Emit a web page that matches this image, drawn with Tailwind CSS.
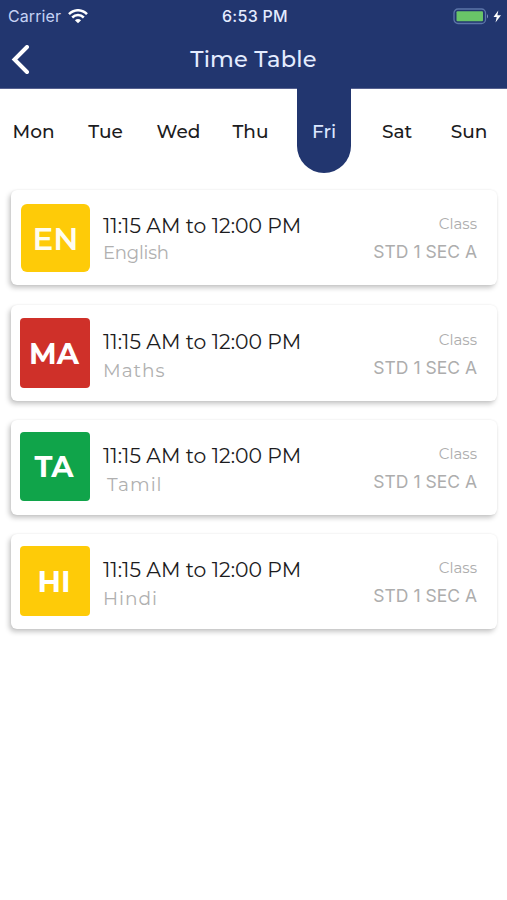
<!DOCTYPE html>
<html lang="en">
<head>
<meta charset="utf-8">
<title>Time Table</title>
<script src="https://cdn.jsdelivr.net/npm/@tailwindcss/browser@4"></script>
</head>
<body class="w-[507px] h-[900px] overflow-hidden bg-white font-['Montserrat','Inter',sans-serif] text-[#1c1c1e]">
<header class="h-[89px] bg-[#22366f] border-b border-[#56618f] text-[#e4ecff]">
  <div class="h-8 grid grid-cols-3 items-center pl-2 pr-[5px] font-['Inter',sans-serif] text-[16px] leading-8">
    <div class="flex items-center gap-[7px]">
      <span class="text-[#c5d2f5] tracking-[0.1px]">Carrier</span>
      <svg class="w-[20px] h-[15px] text-white" viewBox="0 0 20 15" fill="none" stroke="currentColor" stroke-width="2.5"><path d="M1 5.200C6-.1 14-.1 19 5.200M4.200 8.500C7.500 5.200 12.500 5.200 15.800 8.500"/><path d="M10 14.300L6.900 11.200Q10 8.600 13.100 11.200Z" fill="currentColor" stroke="none"/></svg>
    </div>
    <div class="text-center font-medium whitespace-nowrap tracking-[0.3px]"><span>6:53 PM</span></div>
    <div class="flex items-center justify-end">
      <svg class="w-[49px] h-[17px]" viewBox="0 0 49 17"><rect x="1" y="1" width="31.500" height="14.500" rx="4" fill="none" stroke="#5c75a8" stroke-width="1.300"/><rect x="3.500" y="3.300" width="26.500" height="10" rx="1" fill="#69c568"/><path d="M34 6v4.500q2-2.200 0-4.500" fill="#8295c2"/><path d="M45.300 2.500L40.500 9h3.200l-1.200 5.500L48 7.300h-3.600z" fill="#fff"/></svg>
    </div>
  </div>
  <div class="h-14 grid grid-cols-[60px_1fr_60px] items-center">
    <svg class="w-[20px] h-[30px] ml-[10px]" viewBox="0 0 20 30" fill="none" stroke="#fff" stroke-width="4" stroke-linecap="round" stroke-linejoin="miter"><path d="M17 2L4.500 14.500l12.500 12.500"/></svg>
    <h1 class="text-center text-[22.500px] leading-[52px] pb-[2px] font-medium tracking-[0.2px]">Time Table</h1>
  </div>
</header>
<nav class="h-[101px] grid grid-cols-[67px_77px_69px_75px_72px_74px_70px] text-[18.500px] font-medium text-center leading-[86px]">
  <span>Mon</span><span>Tue</span><span>Wed</span><span>Thu</span>
  <span class="justify-self-center w-[54px] h-[85px] -mt-px pt-px rounded-b-[27px] bg-[#22366f] text-[#dce7ff]">Fri</span>
  <span>Sat</span><span>Sun</span>
</nav>
<main class="pl-[11px] pr-[10px]">
  <article class="h-[95px] mb-5 rounded-[6px] bg-white shadow-[-2px_3px_5px_rgba(0,0,0,0.22),0_0_2px_rgba(0,0,0,0.08)] flex">
    <div class="ml-[10px] mt-[14px] w-[69px] h-[68px] rounded-[6px] bg-[#fecb08] text-[#fffdf0] text-[31px] leading-[70px] font-semibold text-center">EN</div>
    <div class="ml-[13px] pt-[22px] w-[220px]"><p class="text-[20.400px] leading-7 whitespace-nowrap">11:15 AM to 12:00 PM</p><p class="text-[18px] leading-6 text-[#b0b0b0] pt-px tracking-[-0.2px]">English</p></div>
    <div class="flex-1 pr-5 pt-[24px] text-right text-[#adadad]"><p class="text-[15px] leading-5">Class</p><p class="font-['Inter',sans-serif] text-[17.500px] leading-6 pt-[6px]">STD 1 SEC A</p></div>
  </article>
  <article class="h-[96px] mb-[19px] rounded-[6px] bg-white shadow-[-2px_3px_5px_rgba(0,0,0,0.22),0_0_2px_rgba(0,0,0,0.08)] flex">
    <div class="ml-[9px] mt-[13px] w-[70px] h-[70px] pr-[2px] rounded-[4px] bg-[#cf3029] text-white text-[29px] leading-[71px] font-bold text-center">MA</div>
    <div class="ml-[13px] pt-[23px] w-[220px]"><p class="text-[20.400px] leading-7 whitespace-nowrap">11:15 AM to 12:00 PM</p><p class="text-[18.500px] leading-6 text-[#b0b0b0] pt-[3px] tracking-[1px]">Maths</p></div>
    <div class="flex-1 pr-5 pt-[25px] text-right text-[#adadad]"><p class="text-[15px] leading-5">Class</p><p class="font-['Inter',sans-serif] text-[17.500px] leading-6 pt-[6px]">STD 1 SEC A</p></div>
  </article>
  <article class="h-[95px] mb-[19px] rounded-[6px] bg-white shadow-[-2px_3px_5px_rgba(0,0,0,0.22),0_0_2px_rgba(0,0,0,0.08)] flex">
    <div class="ml-[9px] mt-[12px] w-[70px] h-[69px] pr-[2px] rounded-[4px] bg-[#10a44a] text-white text-[29px] leading-[70px] font-bold text-center">TA</div>
    <div class="ml-[13px] pt-[22px] w-[220px]"><p class="text-[20.400px] leading-7 whitespace-nowrap">11:15 AM to 12:00 PM</p><p class="text-[18.500px] leading-6 text-[#b0b0b0] pt-[3px] pl-[4px] tracking-[1px]">Tamil</p></div>
    <div class="flex-1 pr-5 pt-[24px] text-right text-[#adadad]"><p class="text-[15px] leading-5">Class</p><p class="font-['Inter',sans-serif] text-[17.500px] leading-6 pt-[6px]">STD 1 SEC A</p></div>
  </article>
  <article class="h-[95px] rounded-[6px] bg-white shadow-[-2px_3px_5px_rgba(0,0,0,0.22),0_0_2px_rgba(0,0,0,0.08)] flex">
    <div class="ml-[9px] mt-[12px] w-[70px] h-[70px] pr-[2px] rounded-[4px] bg-[#fecb08] text-white text-[29px] leading-[71px] font-bold text-center">HI</div>
    <div class="ml-[13px] pt-[22px] w-[220px]"><p class="text-[20.400px] leading-7 whitespace-nowrap">11:15 AM to 12:00 PM</p><p class="text-[18.500px] leading-6 text-[#b0b0b0] pt-[3px] tracking-[1px]">Hindi</p></div>
    <div class="flex-1 pr-5 pt-[24px] text-right text-[#adadad]"><p class="text-[15px] leading-5">Class</p><p class="font-['Inter',sans-serif] text-[17.500px] leading-6 pt-[6px]">STD 1 SEC A</p></div>
  </article>
</main>
</body>
</html>
